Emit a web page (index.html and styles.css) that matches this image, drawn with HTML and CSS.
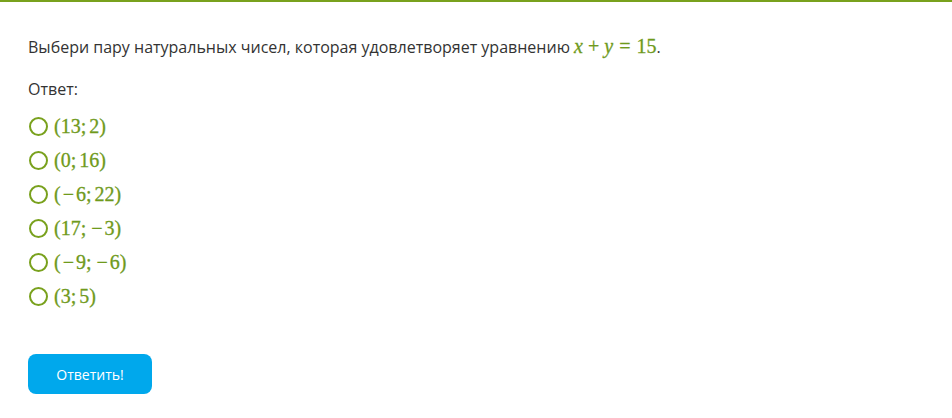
FILE: index.html
```html
<!DOCTYPE html>
<html lang="ru">

<head>
  <meta charset="UTF-8">
  <title>Задание</title>
  <link rel="stylesheet" href="styles.css">
</head>

<body>
  <div class="task">
    <p class="question">
      Выбери пару натуральных чисел, которая удовлетворяет уравнению
      <span class="math"><i>x</i><span class="bin">+</span><i>y</i><span class="rel">=</span>15</span>.
    </p>

    <p class="answer-label">Ответ:</p>

    <!-- Варианты ответа -->
    <ul class="options">
      <li class="option"><span class="radio"></span><span class="math">(13;<span class="sp"></span>2)</span></li>
      <li class="option"><span class="radio"></span><span class="math">(0;<span class="sp"></span>16)</span></li>
      <li class="option"><span class="radio"></span><span class="math">(<span class="neg">−</span>6;<span class="sp"></span>22)</span></li>
      <li class="option"><span class="radio"></span><span class="math">(17;<span class="sp"></span><span class="neg">−</span>3)</span></li>
      <li class="option"><span class="radio"></span><span class="math">(<span class="neg">−</span>9;<span class="sp"></span><span class="neg">−</span>6)</span></li>
      <li class="option"><span class="radio"></span><span class="math">(3;<span class="sp"></span>5)</span></li>
    </ul>

    <button class="submit">Ответить!</button>
  </div>
</body>

</html>
```

FILE: styles.css
```css
body {
  margin: 0;
  padding: 0;
  background-color: #fff;
  font-family: "Open Sans", "Liberation Sans", sans-serif;
  color: #333;
}

.task {
  border-top: 2px solid #79a11d;
  padding: 0 28px;
}

.question {
  margin: 0;
  padding-top: 34px;
  font-size: 16px;
  line-height: 22px;
}

.math {
  font-family: "Liberation Serif", "DejaVu Serif", serif;
  font-size: 20px;
  line-height: 20px;
  color: #6f9a1c;
  white-space: nowrap;
  -webkit-text-stroke: 0.3px #6f9a1c;
}

.math i {
  font-style: italic;
}

/* spacing like TeX: binary operators, relations, punctuation */
.bin {
  margin: 0 5px;
}

.rel {
  margin: 0 6px;
}

.sp {
  display: inline-block;
  width: 3px;
}

.neg {
  display: inline-block;
  padding: 0 2px;
}

.answer-label {
  margin: 0;
  padding-top: 20px;
  font-size: 16px;
  line-height: 22px;
}

.options {
  list-style: none;
  margin: 0;
  padding: 9px 0 0;
}

.option {
  display: flex;
  align-items: center;
  gap: 6px;
  height: 34px;
}

.radio {
  width: 15px;
  height: 15px;
  border: 2px solid #79a11d;
  border-radius: 50%;
  margin-left: 1px;
}

.submit {
  margin-top: 41px;
  width: 124px;
  height: 40px;
  background-color: #00a8ec;
  border: none;
  border-radius: 8px;
  color: #fff;
  font-family: "Open Sans", "Liberation Sans", sans-serif;
  font-size: 14px;
  cursor: pointer;
}
```
